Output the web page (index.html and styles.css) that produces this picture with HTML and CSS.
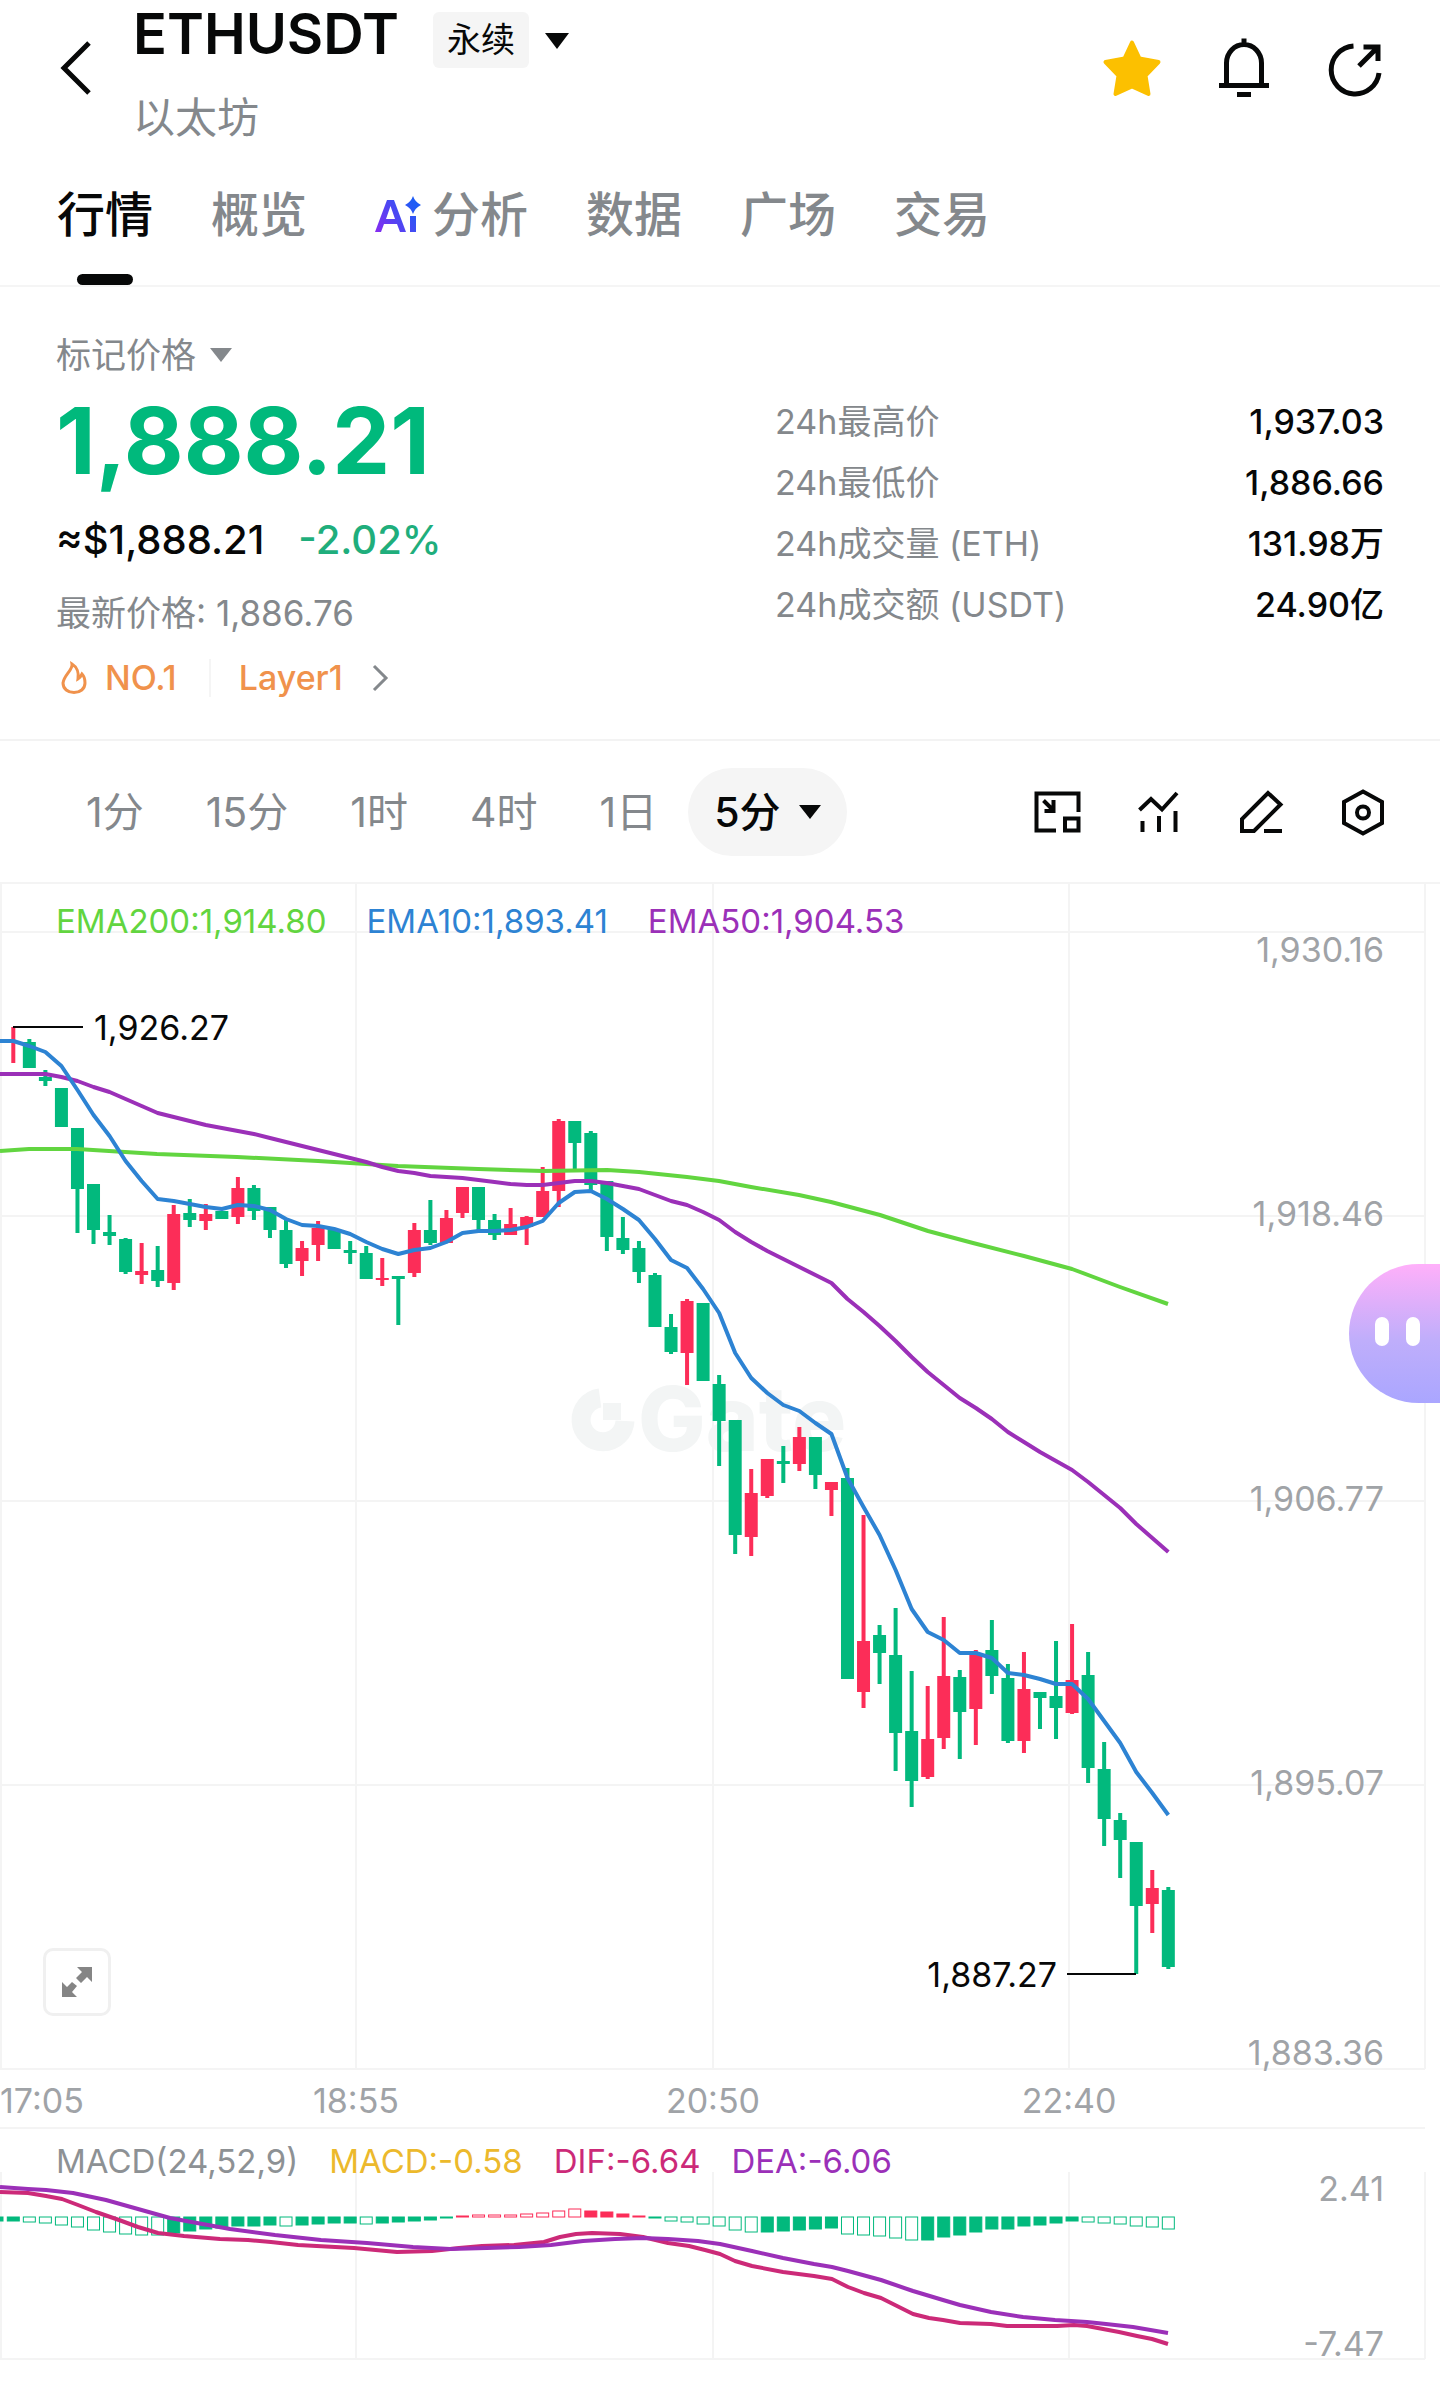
FILE: index.html
```html
<!DOCTYPE html>
<html lang="zh-CN">
<head>
  <meta charset="UTF-8">
  <meta name="viewport" content="width=device-width, initial-scale=1.0">
  <title>ETHUSDT 永续</title>
  <link rel="stylesheet" href="styles.css">
</head>
<body>
  <header class="header">
    <button class="back" type="button" aria-label="返回">
      <svg width="48" height="60" viewBox="0 0 48 60"><path d="M37 5 L12 30 L37 55"/></svg>
    </button>
    <div class="pair">
      <div class="pair-top">
        <h1 class="pair-name">ETHUSDT</h1>
        <span class="badge">永续</span>
        <button class="pair-switch" type="button" aria-label="切换交易对"><span class="caret caret-lg"></span></button>
      </div>
      <div class="pair-sub">以太坊</div>
    </div>
    <div class="header-icons">
      <button type="button" aria-label="收藏">
        <svg width="60" height="60" viewBox="0 0 60 60"><path d="M30 4.500 L37.500 20.500 L56.500 24 L43.500 37.500 L46.500 56 L30 48.500 L13.500 56 L16.500 37.500 L3.500 24 L22.500 20.500 Z" fill="#fcc000" stroke="#fcc000" stroke-width="4" stroke-linejoin="round"/></svg>
      </button>
      <button type="button" aria-label="提醒">
        <svg class="line-icon" width="60" height="60" viewBox="0 0 60 60"><path d="M12.500 47 V25 A17.500 18.500 0 0 1 47.500 25 V47 M5 47.500 H55 M30 0.500 V7 M23 56.500 H37"/></svg>
      </button>
      <button type="button" aria-label="分享">
        <svg class="line-icon" width="60" height="60" viewBox="0 0 60 60"><path d="M27.500 8 A24 24 0 1 0 53 35 M33 28 L52 9 M37.500 9 H52 V23"/></svg>
      </button>
    </div>
  </header>

  <nav class="tabs">
    <a class="tab active" href="#market">行情</a>
    <a class="tab" href="#overview">概览</a>
    <a class="tab tab-ai" href="#ai">
      <svg width="46" height="38" viewBox="0 0 46 38" role="img" aria-label="Ai">
        <defs>
          <linearGradient id="ai" gradientUnits="userSpaceOnUse" x1="0" y1="38" x2="40" y2="10">
            <stop offset="0" stop-color="#8a2af0"/>
            <stop offset="1" stop-color="#1f5cf5"/>
          </linearGradient>
        </defs>
        <g fill="url(#ai)">
          <path d="M0 36 L12 4 H19 L31 36 H25 L22 28 H9 L6 36 Z M11 23 H20 L15.500 10 Z" fill-rule="evenodd"/>
          <path d="M35 20 H41 V36 H35 Z M38 0 Q40 6 46 9 Q40 12 38 18 Q36 12 30 9 Q36 6 38 0 Z"/>
        </g>
      </svg>分析</a>
    <a class="tab" href="#data">数据</a>
    <a class="tab" href="#square">广场</a>
    <a class="tab" href="#trade">交易</a>
  </nav>

  <section class="summary">
    <div class="quote">
      <button class="mark" type="button">标记价格 <span class="caret"></span></button>
      <div class="price">1,888.21</div>
      <div class="fiat"><span>≈$1,888.21</span><span class="change">-2.02%</span></div>
      <div class="latest">最新价格: 1,886.76</div>
      <div class="tags">
        <svg width="28" height="34" viewBox="0 0 28 34"><path d="M12 3 C13 9 4 14 3 22 C3 28 8 31.500 14 31.500 C20 31.500 25 28 25 22 C25 18 24 15 22 13 C21 15 20 17 18 18 C19 12 17 6 12 3 Z"/></svg>
        <a href="#rank">NO.1</a>
        <i class="tags-line"></i>
        <a href="#layer1">Layer1</a>
        <svg class="more" width="18" height="30" viewBox="0 0 18 30"><path d="M3 3 L15 15 L3 27"/></svg>
      </div>
    </div>
    <dl class="stats">
      <div><dt>24h最高价</dt><dd>1,937.03</dd></div>
      <div><dt>24h最低价</dt><dd>1,886.66</dd></div>
      <div><dt>24h成交量 (ETH)</dt><dd>131.98万</dd></div>
      <div><dt>24h成交额 (USDT)</dt><dd>24.90亿</dd></div>
    </dl>
  </section>

  <div class="toolbar">
    <div class="periods">
      <button type="button">1分</button>
      <button type="button">15分</button>
      <button type="button">1时</button>
      <button type="button">4时</button>
      <button type="button">1日</button>
      <button type="button" class="current">5分 <span class="caret"></span></button>
    </div>
    <div class="tools">
      <button type="button" aria-label="画中画">
        <svg width="48" height="48" viewBox="0 0 48 48"><path d="M45.500 24 V5.500 H3.500 V42.500 H23 M10.500 12.500 L20 22 M20.500 12 V23 H11.500 M32 30.500 H45.500 V42.500 H32 Z"/></svg>
      </button>
      <button type="button" aria-label="指标">
        <svg width="48" height="48" viewBox="0 0 48 48"><path d="M4.500 22 L16 11 L27 21.500 L42 5 M7.500 33 V44 M24 28 V44 M40.500 23 V44"/></svg>
      </button>
      <button type="button" aria-label="画线">
        <svg width="48" height="48" viewBox="0 0 48 48"><path d="M5 43 V31 L31 5 L43.500 16.500 L17 43 Z M27 43 H45"/></svg>
      </button>
      <button type="button" aria-label="设置">
        <svg width="48" height="48" viewBox="0 0 48 48"><path d="M24 3.500 L43 14 V35 L24 45.500 L5 35 V14 Z"/><circle cx="24" cy="24.500" r="6"/></svg>
      </button>
    </div>
  </div>

  <main class="chart">
    <svg id="kline" class="kline" viewBox="0 882 1440 1502">
      <g id="grid" class="grid"></g>
      <g class="watermark">
        <path d="M600 1398 A22 22 0 1 0 625 1421"/>
        <rect x="603" y="1403" width="18" height="17"/>
        <text x="638" y="1451">Gate</text>
      </g>
      <g id="candles"></g>
      <g id="macd"></g>
      <g id="lines" class="lines"></g>
      <g class="marks">
        <path d="M13 1027 H83 M1067 1974 H1136"/>
        <text x="94" y="1040">1,926.27</text>
        <text x="1057" y="1987" text-anchor="end">1,887.27</text>
      </g>
      <g class="axis" text-anchor="end">
        <text x="1384" y="962">1,930.16</text>
        <text x="1384" y="1226">1,918.46</text>
        <text x="1384" y="1511">1,906.77</text>
        <text x="1384" y="1795">1,895.07</text>
        <text x="1384" y="2065">1,883.36</text>
        <text x="1384" y="2201">2.41</text>
        <text x="1384" y="2356">-7.47</text>
      </g>
      <g class="axis" text-anchor="middle">
        <text x="0" y="2113" text-anchor="start">17:05</text>
        <text x="356" y="2113">18:55</text>
        <text x="713" y="2113">20:50</text>
        <text x="1069" y="2113">22:40</text>
      </g>
    </svg>
    <div class="legend legend-main">
      <span class="c-green">EMA200:1,914.80</span>
      <span class="c-blue">EMA10:1,893.41</span>
      <span class="c-purple">EMA50:1,904.53</span>
    </div>
    <div class="legend legend-macd">
      <span class="c-gray">MACD(24,52,9)</span>
      <span class="c-yellow">MACD:-0.58</span>
      <span class="c-pink">DIF:-6.64</span>
      <span class="c-purple">DEA:-6.06</span>
    </div>
    <button class="fullscreen" type="button" aria-label="全屏">
      <svg width="32" height="32" viewBox="0 0 32 32"><path d="M16 1 H31 V16 L26 11 L20 17 L15 12 L21 6 Z M16 31 H1 V16 L6 21 L11 16 L16 20 L11 26 Z"/></svg>
    </button>
    <button class="robot" type="button" aria-label="助手"><i></i><i></i></button>
  </main>

  <script src="chart.js"></script>
</body>
</html>
```
FILE: styles.css
```css
* {
  box-sizing: border-box;
}
body {
  margin: 0;
  background: #fff;
  color: #070808;
  font-family: Inter, "Noto Sans CJK SC", sans-serif;
  font-size: 34px;
  overflow-x: hidden;
}
button {
  border: 0;
  padding: 0;
  background: none;
  color: inherit;
  font: inherit;
}
a {
  color: inherit;
  text-decoration: none;
}
svg {
  display: block;
  fill: none;
}
.caret {
  display: inline-block;
  border: 11px solid transparent;
  border-top: 14px solid currentColor;
  border-bottom: 0;
}
.caret-lg {
  border-width: 12px;
  border-top-width: 16px;
  border-bottom: 0;
}

/* header */
.header {
  display: flex;
  align-items: flex-start;
  height: 144px;
  padding: 0 54px 0 52px;
}
.back {
  margin-top: 38px;
}
.back path {
  stroke: #070808;
  stroke-width: 5;
}
.pair {
  flex: 1;
  padding-left: 33px;
}
.pair-top {
  display: flex;
  align-items: center;
  height: 68px;
}
.pair-name {
  margin: 0;
  font-size: 56px;
  font-weight: 600;
  line-height: 68px;
}
.badge {
  margin: 12px 16px 0 34px;
  padding: 0 14px;
  border-radius: 6px;
  background: #f5f5f5;
  line-height: 56px;
}
.pair-switch {
  display: flex;
  margin-top: 14px;
}
.pair-sub {
  margin-top: 25px;
  color: #84888c;
  font-size: 42px;
  line-height: 50px;
}
.header-icons {
  display: flex;
  gap: 52px;
  padding-top: 38px;
}
.line-icon {
  stroke: #070808;
  stroke-width: 5;
}

/* tabs */
.tabs {
  display: flex;
  gap: 58px;
  padding: 0 57px;
  border-bottom: 2px solid #f5f5f5;
}
.tab {
  position: relative;
  color: #84888c;
  font-size: 48px;
  font-weight: 500;
  line-height: 141px;
}
.tab-ai {
  display: flex;
  align-items: center;
  gap: 11px;
  padding-left: 10px;
}
.tab.active {
  color: #070808;
}
.tab.active::after {
  content: '';
  position: absolute;
  bottom: 0;
  left: 50%;
  width: 56px;
  height: 11px;
  margin-left: -28px;
  border-radius: 6px;
  background: #070808;
}

/* price */
.summary {
  display: flex;
  padding: 43px 56px 36px;
  border-bottom: 2px solid #f3f3f3;
}
.quote {
  flex: 0 0 54%;
}
.mark {
  display: flex;
  align-items: center;
  gap: 14px;
  color: #84888c;
  font-size: 35px;
  line-height: 50px;
}
.price {
  margin-top: 6px;
  color: #00b97c;
  font-size: 92px;
  font-weight: 700;
  line-height: 110px;
}
.fiat {
  display: flex;
  gap: 34px;
  margin-top: 14px;
  font-size: 40px;
  font-weight: 500;
  line-height: 60px;
}
.change {
  color: #1fae7c;
}
.latest {
  margin-top: 18px;
  color: #84888c;
  font-size: 35px;
  line-height: 50px;
}
.tags {
  display: flex;
  align-items: center;
  margin-top: 15px;
  padding-left: 4px;
  color: #f0924c;
  font-weight: 500;
  line-height: 50px;
}
.tags svg {
  margin-right: 17px;
  stroke: #f0924c;
  stroke-width: 3;
}
.tags-line {
  width: 2px;
  height: 38px;
  margin: 0 28px 0 32px;
  background: #f5f5f5;
}
.tags .more {
  margin-left: 28px;
  stroke: #84888c;
}
.stats {
  flex: 1;
  margin: 61px 0 0;
  padding-left: 2px;
}
.stats div {
  display: flex;
  justify-content: space-between;
  line-height: 61px;
}
.stats dt {
  color: #84888c;
}
.stats dd {
  margin: 0;
  font-weight: 500;
}

/* toolbar */
.toolbar {
  display: flex;
  justify-content: space-between;
  align-items: center;
  height: 141px;
  padding: 0 53px 0 55px;
}
.periods {
  display: flex;
  color: #84888c;
  font-size: 41px;
  line-height: 88px;
}
.periods button {
  padding: 0 31px;
}
.periods .current {
  display: flex;
  align-items: center;
  gap: 18px;
  padding: 0 26px;
  border-radius: 44px;
  background: #f5f5f5;
  color: #070808;
  font-weight: 500;
}
.tools {
  display: flex;
  gap: 54px;
}
.tools svg {
  stroke: #070808;
  stroke-width: 4;
}

/* chart */
.chart {
  position: relative;
}
.kline {
  width: 100%;
  height: auto;
}
.grid {
  stroke: #f4f4f4;
  stroke-width: 2;
}
.watermark {
  stroke: #f3f5f5;
  stroke-width: 19;
}
.watermark rect,
.watermark text {
  fill: #f3f5f5;
  stroke: none;
}
.watermark text {
  font-size: 90px;
  font-weight: 800;
}
.up {
  fill: #fc2d58;
  stroke: #fc2d58;
}
.down {
  fill: #02b97d;
  stroke: #02b97d;
}
#candles .up,
#candles .down {
  stroke: none;
}
#macd .hollow {
  fill: #fff;
}
.lines {
  stroke-width: 4;
  stroke-linejoin: round;
}
.marks path {
  stroke: #070808;
  stroke-width: 2;
}
.marks text {
  fill: #070808;
}
.axis text {
  fill: #a0a3a7;
}
.legend {
  position: absolute;
  left: 56px;
  display: flex;
  font-size: 33px;
  line-height: 50px;
}
.legend-main {
  top: 14px;
  gap: 40px;
}
.legend-macd {
  top: 83%;
  gap: 31px;
  padding-top: 7px;
}
.c-green { color: #62d540; }
.c-blue { color: #2d83d3; }
.c-purple { color: #9b30b8; }
.c-gray { color: #8d9194; }
.c-yellow { color: #ecb92c; }
.c-pink { color: #cc2a78; }
.fullscreen {
  position: absolute;
  left: 43px;
  top: 71%;
  display: flex;
  align-items: center;
  justify-content: center;
  width: 68px;
  height: 68px;
  border: 3px solid #f0f0f0;
  border-radius: 10px;
  background: #fff;
}
.fullscreen path {
  fill: #858585;
}
.robot {
  position: absolute;
  right: 0;
  top: 382px;
  display: flex;
  align-items: center;
  gap: 17px;
  width: 91px;
  height: 139px;
  padding: 0 0 4px 26px;
  border-radius: 70px 0 0 70px;
  background: linear-gradient(#ffb0fa, #bfaefb 55%, #aaa6ff);
}
.robot i {
  width: 14px;
  height: 29px;
  border-radius: 7px;
  background: #fff;
}
```
FILE: chart.js
```js
// direction, high, body top, body bottom, low
var candles = [
  ['u', 1027, 1041, 1043, 1063], ['d', 1039, 1042, 1068, 1068], ['d', 1070, 1077, 1081, 1086],
  ['d', 1088, 1088, 1127, 1127], ['d', 1128, 1128, 1189, 1233], ['d', 1184, 1184, 1230, 1244],
  ['d', 1215, 1232, 1236, 1245], ['d', 1238, 1239, 1272, 1274], ['u', 1243, 1271, 1275, 1284],
  ['d', 1246, 1270, 1281, 1287], ['u', 1205, 1214, 1283, 1290], ['d', 1199, 1213, 1220, 1227],
  ['u', 1204, 1214, 1221, 1230], ['d', 1211, 1211, 1219, 1219], ['u', 1177, 1188, 1217, 1224],
  ['d', 1185, 1188, 1211, 1220], ['d', 1207, 1207, 1230, 1238], ['d', 1220, 1230, 1264, 1268],
  ['u', 1241, 1248, 1261, 1276], ['u', 1221, 1228, 1245, 1261], ['d', 1229, 1229, 1249, 1249],
  ['d', 1241, 1250, 1253, 1264], ['d', 1246, 1253, 1279, 1279], ['u', 1258, 1278, 1280, 1286],
  ['d', 1276, 1276, 1279, 1325], ['u', 1223, 1230, 1273, 1277], ['d', 1200, 1230, 1243, 1245],
  ['u', 1210, 1218, 1243, 1243], ['u', 1187, 1187, 1213, 1218], ['d', 1187, 1187, 1220, 1230],
  ['d', 1214, 1220, 1235, 1240], ['u', 1208, 1224, 1235, 1235], ['u', 1216, 1217, 1227, 1245],
  ['u', 1167, 1191, 1217, 1217], ['u', 1119, 1121, 1191, 1207], ['d', 1121, 1121, 1143, 1171],
  ['d', 1131, 1133, 1185, 1191], ['d', 1181, 1181, 1237, 1251], ['d', 1217, 1238, 1250, 1254],
  ['d', 1241, 1248, 1272, 1283], ['d', 1273, 1275, 1327, 1327], ['d', 1314, 1327, 1352, 1354],
  ['u', 1299, 1301, 1353, 1385], ['d', 1303, 1303, 1381, 1381], ['d', 1375, 1384, 1421, 1466],
  ['d', 1420, 1420, 1535, 1554], ['u', 1469, 1493, 1537, 1556], ['u', 1459, 1459, 1496, 1498],
  ['d', 1446, 1461, 1464, 1483], ['u', 1427, 1437, 1464, 1471], ['d', 1437, 1437, 1475, 1489],
  ['u', 1482, 1482, 1490, 1516], ['d', 1468, 1478, 1679, 1679], ['u', 1515, 1641, 1692, 1708],
  ['d', 1625, 1635, 1653, 1684], ['d', 1608, 1655, 1733, 1771], ['d', 1671, 1731, 1781, 1807],
  ['u', 1686, 1739, 1777, 1779], ['u', 1617, 1676, 1738, 1749], ['d', 1670, 1677, 1712, 1759],
  ['u', 1650, 1653, 1709, 1745], ['d', 1620, 1650, 1676, 1694], ['d', 1664, 1678, 1741, 1743],
  ['u', 1652, 1689, 1741, 1753], ['d', 1692, 1692, 1698, 1729], ['d', 1641, 1696, 1708, 1739],
  ['u', 1624, 1680, 1713, 1714], ['d', 1652, 1675, 1768, 1783], ['d', 1742, 1769, 1819, 1846],
  ['d', 1813, 1820, 1840, 1878], ['d', 1842, 1842, 1906, 1974], ['u', 1870, 1888, 1904, 1933],
  ['d', 1887, 1890, 1967, 1969]
];

var ema10 = [1041, 1046, 1052, 1066, 1090, 1115, 1136, 1161, 1181, 1199, 1201, 1204, 1207, 1209, 1205,
  1206, 1210, 1219, 1225, 1226, 1229, 1234, 1242, 1249, 1254, 1250, 1248, 1242, 1233, 1231, 1231, 1230,
  1227, 1221, 1203, 1192, 1191, 1199, 1209, 1220, 1239, 1260, 1268, 1289, 1313, 1353, 1378, 1393, 1405,
  1411, 1423, 1434, 1478, 1507, 1535, 1570, 1609, 1632, 1640, 1653, 1653, 1658, 1673, 1675, 1679, 1684,
  1684, 1699, 1721, 1743, 1772, 1793, 1815];

var ema50 = [1074, 1074, 1074, 1077, 1081, 1087, 1092, 1099, 1106, 1113, 1117, 1121, 1125, 1128, 1131,
  1134, 1138, 1142, 1146, 1150, 1154, 1158, 1162, 1167, 1171, 1173, 1176, 1177, 1178, 1180, 1182, 1184,
  1185, 1185, 1183, 1181, 1181, 1183, 1186, 1189, 1195, 1201, 1205, 1212, 1220, 1232, 1242, 1251, 1259,
  1267, 1275, 1283, 1299, 1312, 1326, 1341, 1357, 1372, 1385, 1398, 1408, 1419, 1432, 1442, 1452, 1461,
  1470, 1482, 1495, 1508, 1524, 1538, 1552];

// x,y pairs
var ema200 = '0,1151 29,1149 77,1149 157,1154 237,1157 318,1161 398,1166 478,1169 543,1171 607,1170 ' +
  '639,1172 687,1177 719,1181 751,1187 799,1195 831,1202 880,1215 928,1231 973,1243 1024,1256 1072,1269 1120,1287 1168,1304';
var dif = '0,2192 28,2193 46,2196 62,2199 78,2205 96,2212 119,2220 138,2227 158,2233 184,2236 220,2239 ' +
  '248,2240 271,2242 298,2245 354,2248 397,2252 432,2251 459,2248 482,2246 514,2245 544,2242 560,2237 ' +
  '576,2234 592,2233 620,2234 643,2237 668,2243 689,2246 705,2250 720,2254 735,2261 752,2266 783,2272 ' +
  '814,2276 832,2279 848,2287 864,2293 881,2298 897,2306 913,2314 929,2318 943,2320 960,2323 991,2324 ' +
  '1007,2326 1057,2326 1074,2325 1087,2326 1119,2332 1137,2336 1152,2339 1168,2344';
var dea = '0,2187 28,2189 46,2190 73,2193 106,2200 138,2209 170,2218 197,2223 230,2229 275,2235 321,2240 ' +
  '367,2243 413,2247 450,2249 487,2248 519,2247 551,2245 583,2241 615,2239 643,2238 668,2239 698,2241 ' +
  '720,2244 752,2251 783,2258 814,2264 832,2267 848,2271 881,2280 913,2291 943,2300 960,2305 991,2312 ' +
  '1023,2317 1055,2320 1087,2322 1106,2324 1133,2327 1168,2333';

// bar heights, positive hangs below the zero line
var bars = [4, 5, 6, 8, 10, 13, 15, 17, 18, 18, 16, 14, 12, 11, 9, 9, 8, 9, 8, 7, 6, 6, 7, 6, 5, 4, 3, 1,
  -1, -2, -2, -2, -3, -4, -6, -8, -6, -5, -3, -1, 1, 4, 5, 7, 9, 13, 15, 15, 14, 13, 12, 11, 17, 18, 19,
  21, 23, 23, 20, 18, 15, 12, 12, 9, 8, 6, 4, 5, 6, 7, 9, 10, 12];

var first = 13.3, step = 16.042, zero = 2217;

function el(name, attrs, parent) {
  var node = document.createElementNS('http://www.w3.org/2000/svg', name);
  for (var key in attrs) {
    node.setAttribute(key, attrs[key]);
  }
  document.getElementById(parent).appendChild(node);
}
function xAt(i) {
  return first + i * step;
}
function series(values) {
  return '0,' + values[0] + ' ' + values.map(function (v, i) {
    return xAt(i) + ',' + v;
  }).join(' ');
}

// grid
[932, 1216, 1501, 1785, 2069, 2128, 2359].forEach(function (y) {
  el('line', { x1: 0, x2: 1425, y1: y, y2: y }, 'grid');
});
el('line', { x1: 0, x2: 1440, y1: 883, y2: 883 }, 'grid');
[1, 356, 713, 1069, 1425].forEach(function (x) {
  el('line', { x1: x, x2: x, y1: 883, y2: 2069 }, 'grid');
  el('line', { x1: x, x2: x, y1: 2172, y2: 2359 }, 'grid');
});

candles.forEach(function (c, i) {
  var cls = c[0] === 'u' ? 'up' : 'down';
  var x = xAt(i);
  el('rect', { class: cls, x: x - 2, y: c[1], width: 4, height: c[4] - c[1] }, 'candles');
  el('rect', { class: cls, x: x - 6.5, y: c[2], width: 13, height: c[3] - c[2] }, 'candles');
});

el('rect', { class: 'down', x: 0, y: zero, width: 3, height: 4 }, 'macd');
bars.forEach(function (h, i) {
  var hollow = i > 0 && Math.abs(h) >= 2 && (Math.abs(h) > Math.abs(bars[i - 1]) || i === 9 || i === 30 || i === 31);
  var cls = (h < 0 ? 'up' : 'down') + (hollow ? ' hollow' : '');
  el('rect', { class: cls, x: xAt(i) - 6, y: h < 0 ? zero + h : zero, width: 12, height: Math.abs(h) }, 'macd');
});

el('polyline', { points: ema200, stroke: '#62d540' }, 'lines');
el('polyline', { points: series(ema50), stroke: '#9b30b8' }, 'lines');
el('polyline', { points: series(ema10), stroke: '#2d83d3' }, 'lines');
el('polyline', { points: dif, stroke: '#cc2a78' }, 'lines');
el('polyline', { points: dea, stroke: '#9b30b8' }, 'lines');
```
